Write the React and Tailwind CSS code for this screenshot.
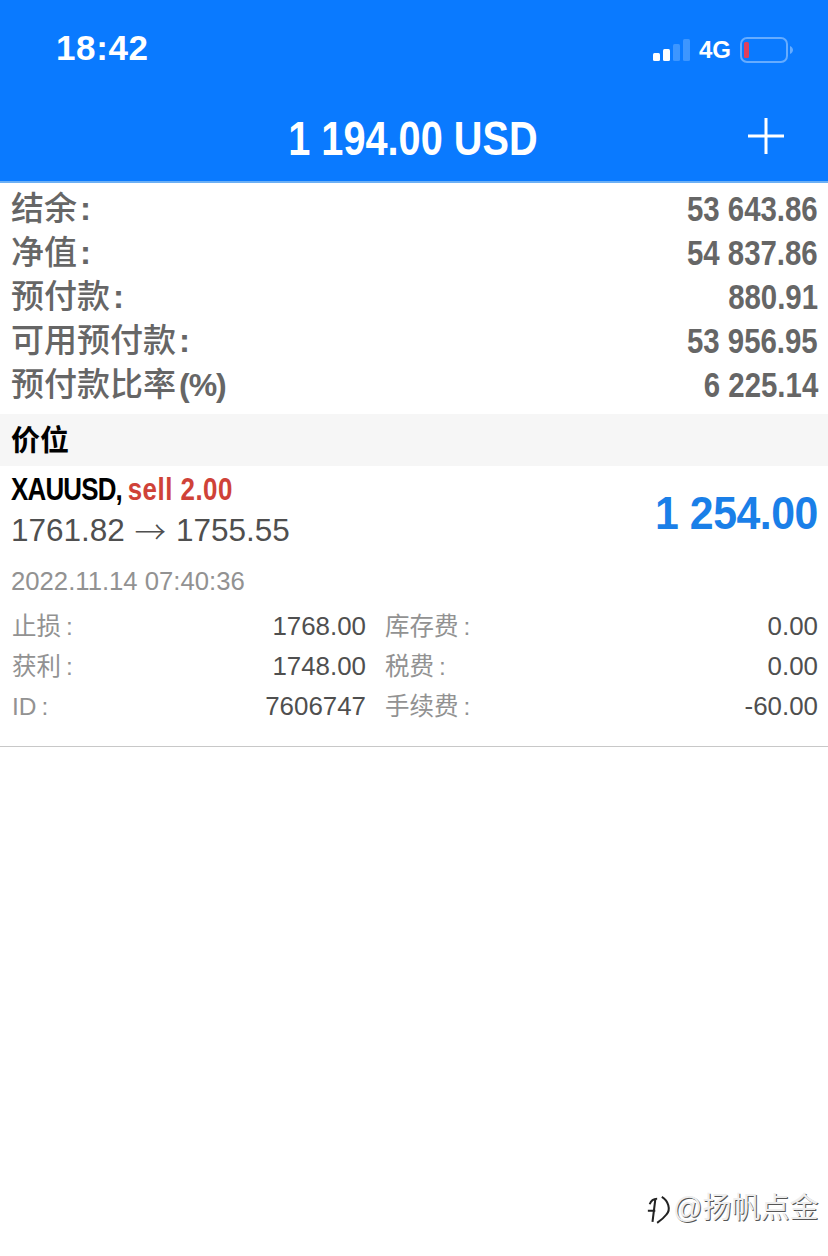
import React from "react";

const SANS = "font-['Liberation_Sans','Noto_Sans_CJK_SC',sans-serif]";

const summary = [
  ["结余", ":", "53 643.86"],
  ["净值", ":", "54 837.86"],
  ["预付款", ":", "880.91"],
  ["可用预付款", ":", "53 956.95"],
  ["预付款比率", "(%)", "6 225.14"],
];

const details = [
  ["止损", "1768.00", "库存费", "0.00"],
  ["获利", "1748.00", "税费", "0.00"],
  ["ID", "7606747", "手续费", "-60.00"],
];

const Signal = () => (
  <svg width="38" height="24" viewBox="0 0 38 24" className="block">
    <rect x="1" y="15" width="7" height="8" rx="1.5" fill="#fff" />
    <rect x="11" y="11" width="7" height="12" rx="1.5" fill="#fff" />
    <rect x="21" y="6" width="7" height="17" rx="1.5" fill="#3d96ff" />
    <rect x="31" y="1" width="7" height="22" rx="1.5" fill="#3d96ff" />
  </svg>
);

const Battery = () => (
  <svg width="54" height="28" viewBox="0 0 54 28" className="block">
    <rect x="1" y="2" width="46" height="24" rx="6" fill="none" stroke="#66acff" strokeWidth="2" />
    <rect x="4" y="6" width="5" height="16" rx="1.5" fill="#e0405c" />
    <path d="M50 10c2 1 3 2.500 3 4s-1 3-3 4z" fill="#66acff" />
  </svg>
);

const Label = ({ text }) => (
  <span className="text-[#929292] text-[24.5px] pl-[1px]">
    {text}
    <span className="ml-[5px]">:</span>
  </span>
);

export default function App() {
  return (
    <div className={`w-[828px] h-[1256px] bg-white relative overflow-hidden ${SANS}`}>
      {/* barra azul */}
      <header className="h-[183px] bg-[#0a7aff] border-b-2 border-[#6cb0f5] text-white flex flex-col">
        <div className="h-[96px] flex items-center justify-between pl-[56px] pr-[34px]">
          <span className="text-[35px] font-bold tracking-[0.6px]">18:42</span>
          <div className="flex items-center gap-[9px] pt-[4px]">
            <Signal />
            <span className="text-[24px] font-bold">4G</span>
            <Battery />
          </div>
        </div>
        <div className="flex-1 relative flex items-center justify-center pr-[2px]">
          <span className="text-[49px] font-bold scale-x-[0.81] whitespace-nowrap">1 194.00 USD</span>
          <svg width="38" height="38" viewBox="0 0 38 38" className="absolute right-[43px] top-[21px]">
            <path d="M19 1v36M1 19h36" stroke="#fff" strokeWidth="3" />
          </svg>
        </div>
      </header>

      {/* resumen */}
      <section className="pl-[11px] pr-[10px] pt-[4px] h-[231px]">
        {summary.map(([label, suffix, value]) => (
          <div key={label} className="h-[44px] flex items-center justify-between text-[#666666]">
            <span className="text-[33px] font-medium whitespace-nowrap">
              {label}
              {suffix === ":" ? (
                <span className="font-bold ml-[3px]">:</span>
              ) : (
                <span className="font-bold text-[32px] tracking-[-1px] ml-[3px]">{suffix}</span>
              )}
            </span>
            <span className="text-[35px] font-bold scale-x-[0.84] origin-right whitespace-nowrap">{value}</span>
          </div>
        ))}
      </section>

      <div className="h-[52px] bg-[#f6f6f6] pl-[11px] pt-[3px] flex items-center text-[29px] font-bold text-black">价位</div>

      {/* posición */}
      <section className="h-[281px] border-b border-[#c8c8c8] pl-[11px] pr-[10px]">
        <div className="flex justify-between h-[90px]">
          <div className="pt-[4px]">
            <div className="text-[32px] leading-[38px] font-bold scale-x-[0.81] origin-left whitespace-nowrap">
              <span className="text-black tracking-[-1px]">XAUUSD,</span>
              <span className="text-[#cf4238] tracking-[0.6px] ml-[7px]">sell 2.00</span>
            </div>
            <div className="text-[31.5px] leading-[40px] pt-[2px] text-[#4f4f4f] whitespace-nowrap flex items-center">
              <span>1761.82</span>
              <span className="w-[51px] text-center font-['Noto_Sans_CJK_SC',sans-serif] font-light">→</span>
              <span>1755.55</span>
            </div>
          </div>
          <div className="text-[#1a7fe8] text-[47px] font-bold tracking-[-0.5px] scale-x-[0.91] origin-right pt-[12px] whitespace-nowrap">1 254.00</div>
        </div>
        <div className="text-[25.7px] leading-[30px] text-[#929292] pt-[10px] h-[48px]">2022.11.14 07:40:36</div>
        <div className="pt-[2px]">
          {details.map(([a, b, c, d]) => (
            <div key={a} className="h-[40px] flex items-center text-[25.9px]">
              <div className="w-[120px]"><Label text={a} /></div>
              <span className="w-[235px] text-right text-[#4f4f4f]">{b}</span>
              <div className="ml-[18px] w-[120px]"><Label text={c} /></div>
              <span className="flex-1 text-right text-[#4f4f4f]">{d}</span>
            </div>
          ))}
        </div>
      </section>

      {/* marca de agua */}
      <div className="absolute left-[646px] top-[1189px] flex items-center text-[29px] leading-[38px] text-[#eeeeee] [text-shadow:1px_1px_0_#555555]">
        <svg width="26" height="36" viewBox="0 0 28 36">
          <path d="M4 14Q6 8 12 8M10 9L7 33M2 21H10" fill="none" stroke="#222" strokeWidth="2.2" />
          <path d="M17 6C24 10 27 20 22 25C19 29 15 32 12 34" fill="none" stroke="#222" strokeWidth="2.2" />
        </svg>
        <span className="ml-[1px]">@扬帆点金</span>
      </div>
    </div>
  );
}
